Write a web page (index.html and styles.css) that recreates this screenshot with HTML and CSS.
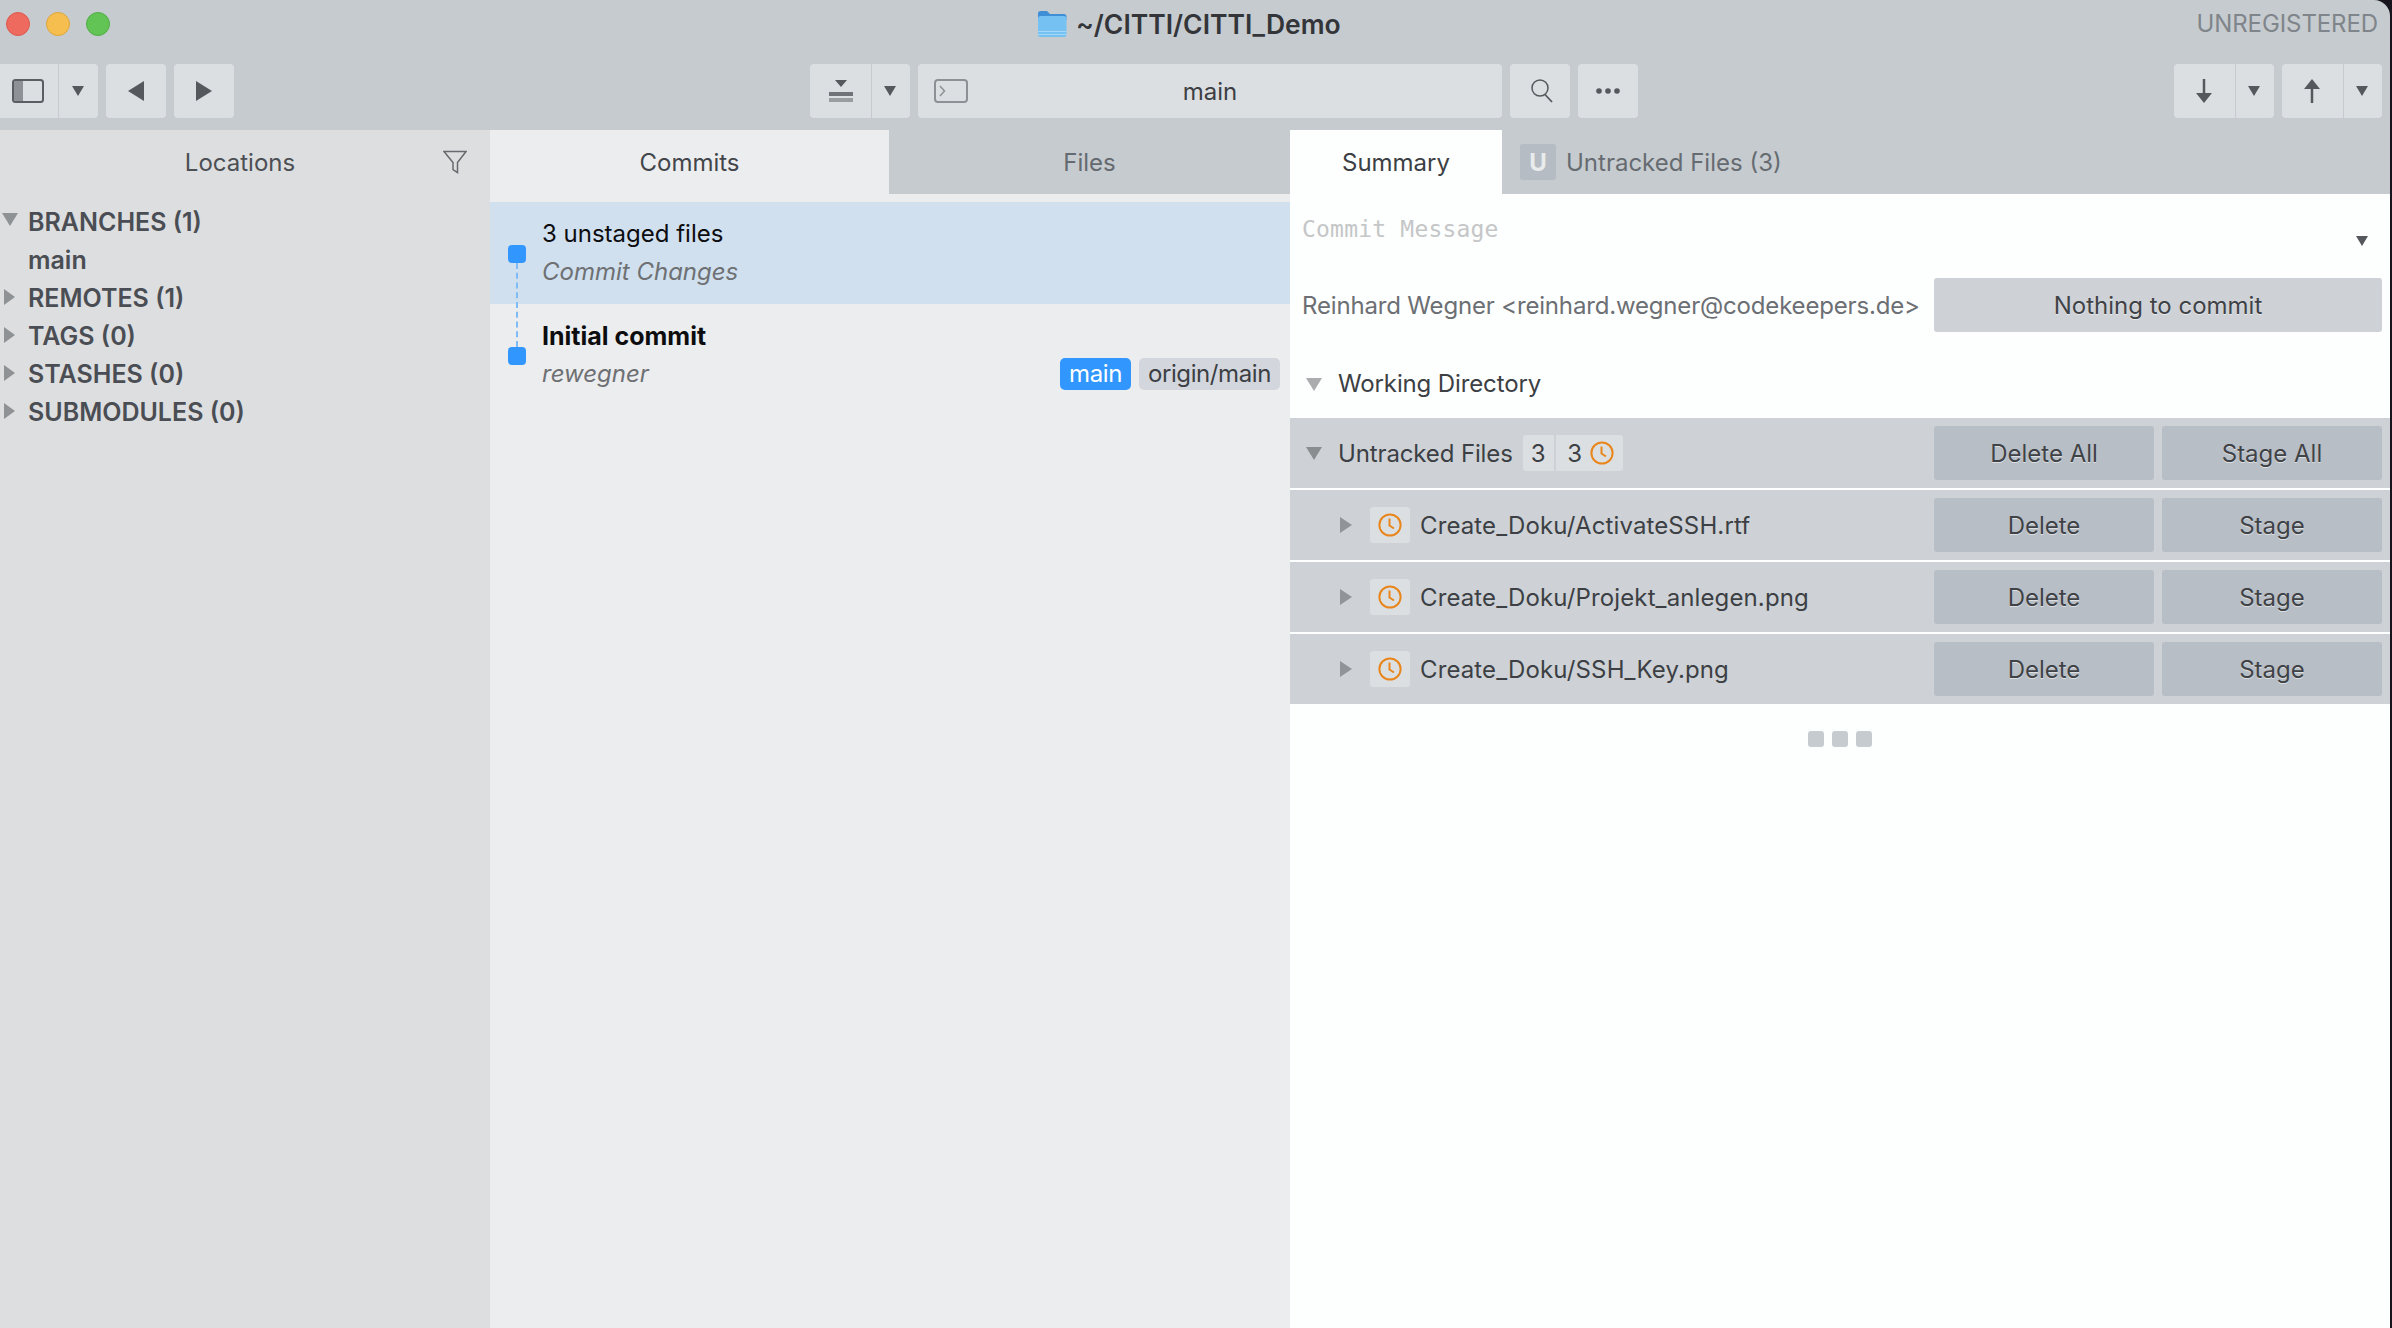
FILE: index.html
```html
<!DOCTYPE html>
<html lang="en">
<head>
    <meta charset="UTF-8">
    <title>~/CITTI/CITTI_Demo</title>
    <link rel="stylesheet" href="styles.css">
</head>
<body>
    <svg class="defs" width="0" height="0">
        <symbol id="clock" viewBox="0 0 24 24">
            <circle cx="12" cy="12" r="10.6" fill="none" stroke="#e8861c" stroke-width="2"/>
            <path d="M11.5 5.5V12.5L16 15.5" fill="none" stroke="#e8861c" stroke-width="2"/>
        </symbol>
    </svg>

    <div class="window">
        <header class="titlebar">
            <div class="lights">
                <span class="light red"></span>
                <span class="light yellow"></span>
                <span class="light green"></span>
            </div>
            <div class="title">
                <svg width="30" height="28" viewBox="0 0 30 28">
                    <path d="M1 3.5A2.5 2.5 0 0 1 3.500 1H10L13 4H27A2.500 2.500 0 0 1 29.500 6.500V10H1Z" fill="#3f8fd6"/>
                    <rect x="1" y="6" width="28.500" height="21" rx="2.500" fill="#74c1f2"/>
                    <rect x="1" y="21" width="28.500" height="1" fill="#a5d8f7"/>
                    <rect x="1" y="24" width="28.500" height="1" fill="#a5d8f7"/>
                </svg>
                <span>~/CITTI/CITTI_Demo</span>
            </div>
            <div class="unregistered">UNREGISTERED</div>
        </header>

        <div class="toolbar">
            <div class="tool-group">
                <button class="tool tool-panel">
                    <svg width="32" height="24" viewBox="0 0 32 24">
                        <rect x="1" y="1" width="30" height="22" rx="2.500" fill="none" stroke="#5a5d61" stroke-width="2"/>
                        <rect x="2" y="2" width="9" height="20" fill="#8e9195"/>
                    </svg>
                </button>
                <button class="tool tool-caret tool-caret-wide"><span class="caret"></span></button>
                <button class="tool tool-nav">
                    <svg width="16" height="20" viewBox="0 0 16 20"><path d="M16 0V20L0 10Z" fill="#55585c"/></svg>
                </button>
                <button class="tool tool-nav">
                    <svg width="16" height="20" viewBox="0 0 16 20"><path d="M0 0V20L16 10Z" fill="#55585c"/></svg>
                </button>
            </div>

            <div class="tool-group tool-center">
                <button class="tool tool-stage">
                    <svg width="24" height="22" viewBox="0 0 24 22">
                        <path d="M6 0H18L12 7Z" fill="#55585c"/>
                        <rect y="12" width="24" height="4" fill="#707377"/>
                        <rect y="18" width="24" height="4" fill="#9a9da0"/>
                    </svg>
                </button>
                <button class="tool tool-caret"><span class="caret"></span></button>
                <div class="branch-field">
                    <svg class="terminal" width="34" height="24" viewBox="0 0 34 24">
                        <rect x="1" y="1" width="32" height="22" rx="3" fill="none" stroke="#8d9094" stroke-width="2"/>
                        <path d="M6 7L10.500 12L6 17" fill="none" stroke="#8d9094" stroke-width="1.500"/>
                    </svg>
                    <span>main</span>
                </div>
                <button class="tool tool-square tool-search">
                    <svg width="26" height="24" viewBox="0 0 26 24">
                        <circle cx="11" cy="9" r="8" fill="none" stroke="#55585c" stroke-width="1.500"/>
                        <path d="M16 15.500L23 23" fill="none" stroke="#55585c" stroke-width="1.800"/>
                    </svg>
                </button>
                <button class="tool tool-square">
                    <svg width="24" height="6" viewBox="0 0 24 6">
                        <circle cx="3" cy="3" r="2.800" fill="#55585c"/>
                        <circle cx="12" cy="3" r="2.800" fill="#55585c"/>
                        <circle cx="21" cy="3" r="2.800" fill="#55585c"/>
                    </svg>
                </button>
            </div>

            <div class="tool-group tool-right">
                <button class="tool tool-square">
                    <svg width="16" height="24" viewBox="0 0 16 24"><path d="M8 0V16" stroke="#55585c" stroke-width="2.500"/><path d="M0 14H16L8 24Z" fill="#55585c"/></svg>
                </button>
                <button class="tool tool-caret"><span class="caret"></span></button>
                <button class="tool tool-square tool-push">
                    <svg width="16" height="24" viewBox="0 0 16 24"><path d="M8 8V24" stroke="#55585c" stroke-width="2.500"/><path d="M0 10H16L8 0Z" fill="#55585c"/></svg>
                </button>
                <button class="tool tool-caret"><span class="caret"></span></button>
            </div>
        </div>

        <div class="panes">
            <aside class="sidebar">
                <div class="sidebar-head">
                    <span>Locations</span>
                    <svg class="filter" width="24" height="24" viewBox="0 0 24 24">
                        <path d="M1 1.500H23L14.500 12.500V22.500L10 19.500V12.500Z" fill="none" stroke="#66696d" stroke-width="1.500"/>
                    </svg>
                </div>
                <ul class="tree">
                    <li><span class="tri-down"></span>BRANCHES (1)</li>
                    <li>main</li>
                    <li><span class="tri-right"></span>REMOTES (1)</li>
                    <li><span class="tri-right"></span>TAGS (0)</li>
                    <li><span class="tri-right"></span>STASHES (0)</li>
                    <li><span class="tri-right"></span>SUBMODULES (0)</li>
                </ul>
            </aside>

            <section class="history">
                <div class="history-tabs">
                    <div class="tab tab-on">Commits</div>
                    <div class="tab tab-files">Files</div>
                </div>
                <div class="commits">
                    <div class="commit commit-sel">
                        <span class="dot"></span>
                        <div class="commit-title">3 unstaged files</div>
                        <div class="commit-sub">Commit Changes</div>
                    </div>
                    <div class="commit">
                        <span class="dot"></span>
                        <div class="commit-title bold">Initial commit</div>
                        <div class="commit-sub">rewegner</div>
                        <div class="refs">
                            <span class="ref ref-main">main</span>
                            <span class="ref">origin/main</span>
                        </div>
                    </div>
                </div>
            </section>

            <section class="detail">
                <div class="detail-tabs">
                    <div class="tab-summary">Summary</div>
                    <div class="tab-untracked"><span class="u-badge">U</span>Untracked Files (3)</div>
                </div>
                <div class="message">
                    <span>Commit Message</span>
                    <span class="caret"></span>
                </div>
                <div class="author">
                    <span class="author-name">Reinhard Wegner &lt;reinhard.wegner@codekeepers.de&gt;</span>
                    <button class="btn btn-commit">Nothing to commit</button>
                </div>
                <div class="workdir"><span class="tri-down tri-big"></span>Working Directory</div>

                <div class="row">
                    <span class="tri-down tri-big tri-dark"></span>
                    <span class="row-name">Untracked Files</span>
                    <span class="counts">
                        <span class="count">3</span>
                        <span class="count count-clock">3<svg width="24" height="24"><use href="#clock"/></svg></span>
                    </span>
                    <button class="btn row-btn">Delete All</button>
                    <button class="btn">Stage All</button>
                </div>
                <div class="row file-row">
                    <span class="tri-right tri-file"></span>
                    <span class="file-badge"><svg width="24" height="24"><use href="#clock"/></svg></span>
                    <span class="row-name">Create_Doku/ActivateSSH.rtf</span>
                    <button class="btn row-btn">Delete</button>
                    <button class="btn">Stage</button>
                </div>
                <div class="row file-row">
                    <span class="tri-right tri-file"></span>
                    <span class="file-badge"><svg width="24" height="24"><use href="#clock"/></svg></span>
                    <span class="row-name">Create_Doku/Projekt_anlegen.png</span>
                    <button class="btn row-btn">Delete</button>
                    <button class="btn">Stage</button>
                </div>
                <div class="row file-row">
                    <span class="tri-right tri-file"></span>
                    <span class="file-badge"><svg width="24" height="24"><use href="#clock"/></svg></span>
                    <span class="row-name">Create_Doku/SSH_Key.png</span>
                    <button class="btn row-btn">Delete</button>
                    <button class="btn">Stage</button>
                </div>

                <div class="more"><span></span><span></span><span></span></div>
            </section>
        </div>
    </div>
</body>
</html>
```

FILE: styles.css
```css
html, body {
    height: 100%;
}

body {
    margin: 0;
    background-color: #17141e;
    font-family: Inter, "Noto Sans", sans-serif;
    font-size: 24px;
    color: #3c3f44;
    overflow: hidden;
}

.defs {
    position: absolute;
}

button {
    font: inherit;
    color: inherit;
    border: none;
    padding: 0;
}

.window {
    width: 2390px;
    height: 1328px;
    display: flex;
    flex-direction: column;
    background-color: #c6cbcf;
    border-top-right-radius: 16px;
    overflow: hidden;
}

/* title bar */
.titlebar {
    height: 64px;
    flex: none;
    display: grid;
    grid-template-columns: 1037px auto 1fr;
    box-sizing: border-box;
    padding-bottom: 17px;
    align-items: center;
}

.lights {
    display: flex;
    gap: 16px;
    padding-left: 6px;
}

.light {
    width: 24px;
    height: 24px;
    border-radius: 50%;
    box-sizing: border-box;
}

.red {
    background-color: #ee6a5f;
    border: 1px solid #dc5a50;
}

.yellow {
    background-color: #f5be4f;
    border: 1px solid #dfa63c;
}

.green {
    background-color: #61c454;
    border: 1px solid #52ad46;
}

.title {
    display: flex;
    align-items: center;
    gap: 9px;
    font-size: 26.5px;
    font-weight: 600;
    color: #333539;
}

.unregistered {
    text-align: right;
    padding-right: 12px;
    letter-spacing: -0.1px;
    color: #7f858a;
}

/* toolbar */
.toolbar {
    height: 66px;
    flex: none;
    display: flex;
    padding-right: 8px;
    box-sizing: border-box;
}

.tool-group {
    display: flex;
    height: 54px;
}

.tool-center {
    margin-left: 576px;
}

.tool-right {
    margin-left: auto;
}

.tool {
    height: 54px;
    background-color: #dcdfe2;
    border-radius: 4px;
    display: flex;
    align-items: center;
    justify-content: center;
}

.tool-panel {
    width: 58px;
    border-radius: 0;
    justify-content: flex-start;
    padding-left: 12px;
}

.tool-stage {
    width: 61px;
    border-radius: 4px 0 0 4px;
}

.tool-square {
    width: 60px;
    margin-left: 8px;
}

.tool-search {
    padding-left: 3px;
}

.tool-right .tool-square:first-child {
    margin-left: 0;
}

.tool-right .tool-square {
    width: 61px;
    padding-right: 2px;
    border-radius: 4px 0 0 4px;
}

.tool-right .tool-push {
    margin-left: 8px;
}

.tool-caret {
    width: 38px;
    margin-left: 1px;
    padding-right: 2px;
    box-sizing: border-box;
    border-radius: 0 4px 4px 0;
}

.tool-caret-wide {
    width: 39px;
}

.tool-nav {
    width: 60px;
    margin-left: 8px;
}

.caret {
    width: 0;
    height: 0;
    border-left: 6px solid transparent;
    border-right: 6px solid transparent;
    border-top: 10px solid #55585c;
}

.branch-field {
    width: 584px;
    margin-left: 8px;
    height: 54px;
    background-color: #dcdfe2;
    border-radius: 4px;
    display: flex;
    align-items: center;
    justify-content: center;
    position: relative;
}

.terminal {
    position: absolute;
    left: 16px;
    top: 15px;
}

/* panes */
.panes {
    flex: 1;
    display: flex;
    min-height: 0;
}

.sidebar {
    width: 490px;
    flex: none;
    background-color: #dddee0;
}

.sidebar-head {
    height: 64px;
    display: flex;
    align-items: center;
    justify-content: center;
    padding-right: 10px;
    color: #4c4f54;
    position: relative;
}

.filter {
    position: absolute;
    left: 443px;
    top: 20px;
}

.tree {
    list-style: none;
    margin: 9px 0 0;
    padding: 0 0 0 28px;
    font-size: 25px;
    font-weight: 600;
    color: #4a4e54;
}

.tree li {
    height: 38px;
    line-height: 38px;
    position: relative;
}

.tri-down,
.tri-right {
    display: block;
    width: 0;
    height: 0;
}

.tree .tri-down {
    position: absolute;
    left: -26px;
    top: 10px;
    border-left: 8px solid transparent;
    border-right: 8px solid transparent;
    border-top: 13px solid #8f9295;
}

.tree .tri-right {
    position: absolute;
    left: -24px;
    top: 10px;
    border-top: 8px solid transparent;
    border-bottom: 8px solid transparent;
    border-left: 11px solid #8f9295;
}

.history {
    width: 800px;
    flex: none;
    background-color: #ecedef;
    display: flex;
    flex-direction: column;
}

.history-tabs {
    height: 64px;
    flex: none;
    display: flex;
    margin-bottom: 8px;
}

.tab {
    display: flex;
    align-items: center;
    justify-content: center;
}

.tab-on {
    width: 399px;
    color: #42454a;
}

.tab-files {
    flex: 1;
    background-color: #c6cbcf;
    color: #646a70;
}

.commit {
    height: 102px;
    box-sizing: border-box;
    padding: 13px 0 0 52px;
    position: relative;
}

.commit-sel {
    background-color: #d0e0ef;
}

.commit-title {
    height: 38px;
    line-height: 38px;
    color: #0d0d0f;
}

.bold {
    font-size: 25px;
    font-weight: 700;
}

.commit-sub {
    height: 38px;
    line-height: 38px;
    font-style: italic;
    color: #6e7073;
}

.dot {
    position: absolute;
    left: 18px;
    top: 43px;
    width: 18px;
    height: 18px;
    background-color: #3197fe;
    border-radius: 4px;
}

/* dashed link between the two commits */
.commit-sel .dot::after {
    content: "";
    position: absolute;
    left: 8px;
    top: 18px;
    height: 84px;
    border-left: 2px dashed #7fbbf6;
}

.refs {
    position: absolute;
    right: 10px;
    top: 54px;
    display: flex;
    gap: 8px;
    letter-spacing: -0.4px;
}

.ref {
    height: 32px;
    line-height: 32px;
    padding: 0 9px;
    border-radius: 5px;
    background-color: #d3d7dd;
    color: #3c3f44;
}

.ref-main {
    background-color: #3197fe;
    color: #fff;
}

.detail {
    flex: 1;
    min-width: 0;
    background-color: #fdfefe;
    display: flex;
    flex-direction: column;
}

.detail-tabs {
    height: 64px;
    flex: none;
    display: flex;
    background-color: #c6cbcf;
}

.tab-summary {
    width: 212px;
    background-color: #fdfefe;
    display: flex;
    align-items: center;
    justify-content: center;
    color: #3c3f44;
}

.tab-untracked {
    display: flex;
    align-items: center;
    padding-left: 18px;
    gap: 10px;
    color: #666b71;
}

.u-badge {
    width: 36px;
    height: 36px;
    background-color: #b6bcc3;
    border-radius: 3px;
    color: #e9ebed;
    font-weight: 700;
    display: flex;
    align-items: center;
    justify-content: center;
}

.message {
    height: 84px;
    flex: none;
    box-sizing: border-box;
    padding: 22px 8px 0 12px;
    display: flex;
    justify-content: space-between;
    font-family: "DejaVu Sans Mono", monospace;
    font-size: 23px;
    letter-spacing: 0.2px;
    color: #c4c6c7;
}

.message .caret {
    margin: 20px 14px 0 0;
}

.author {
    height: 54px;
    flex: none;
    display: flex;
    align-items: center;
    justify-content: space-between;
    padding: 0 8px 0 12px;
    color: #6c6f73;
}

.author-name {
    letter-spacing: -0.17px;
}

.btn {
    width: 220px;
    height: 54px;
    flex: none;
    background-color: #b8bec5;
    border-radius: 3px;
    color: #3f4247;
    text-shadow: 0 1px 0 rgba(255, 255, 255, 0.55);
}

.btn-commit {
    width: 448px;
    background-color: #ced2d6;
}

.workdir {
    height: 86px;
    flex: none;
    box-sizing: border-box;
    padding: 32px 0 0 48px;
    line-height: 40px;
    letter-spacing: -0.13px;
    position: relative;
}

.tri-big {
    position: absolute;
    left: 16px;
    top: 46px;
    border-left: 8px solid transparent;
    border-right: 8px solid transparent;
    border-top: 13px solid #aaacae;
}

.row {
    height: 70px;
    flex: none;
    margin-bottom: 2px;
    background-color: #ced2d6;
    display: flex;
    align-items: center;
    padding: 0 8px 0 48px;
    position: relative;
}

.row .tri-big {
    top: 29px;
    border-top-color: #8a8d90;
}

.row-name {
    white-space: nowrap;
    letter-spacing: -0.13px;
}

.row-btn {
    margin-left: auto;
    margin-right: 8px;
}

.counts {
    display: flex;
    margin-left: 10px;
    height: 36px;
    gap: 2px;
}

.count {
    background-color: #dcdfe2;
    border-radius: 3px 0 0 3px;
    min-width: 31px;
    display: flex;
    align-items: center;
    justify-content: center;
}

.count-clock {
    width: 67px;
    gap: 8px;
    padding-left: 3px;
    box-sizing: border-box;
    border-radius: 0 3px 3px 0;
}

.file-row {
    padding-left: 50px;
}

.file-row .row-name {
    letter-spacing: 0.12px;
}

.tri-file {
    flex: none;
    border-top: 8px solid transparent;
    border-bottom: 8px solid transparent;
    border-left: 12px solid #909397;
}

.file-badge {
    width: 40px;
    height: 36px;
    flex: none;
    margin: 0 10px 0 18px;
    background-color: #dcdfe2;
    border-radius: 3px;
    display: flex;
    align-items: center;
    justify-content: center;
}

.more {
    display: flex;
    justify-content: center;
    gap: 8px;
    margin-top: 25px;
}

.more span {
    width: 16px;
    height: 16px;
    background-color: #c6cbcf;
    border-radius: 3px;
}
```
